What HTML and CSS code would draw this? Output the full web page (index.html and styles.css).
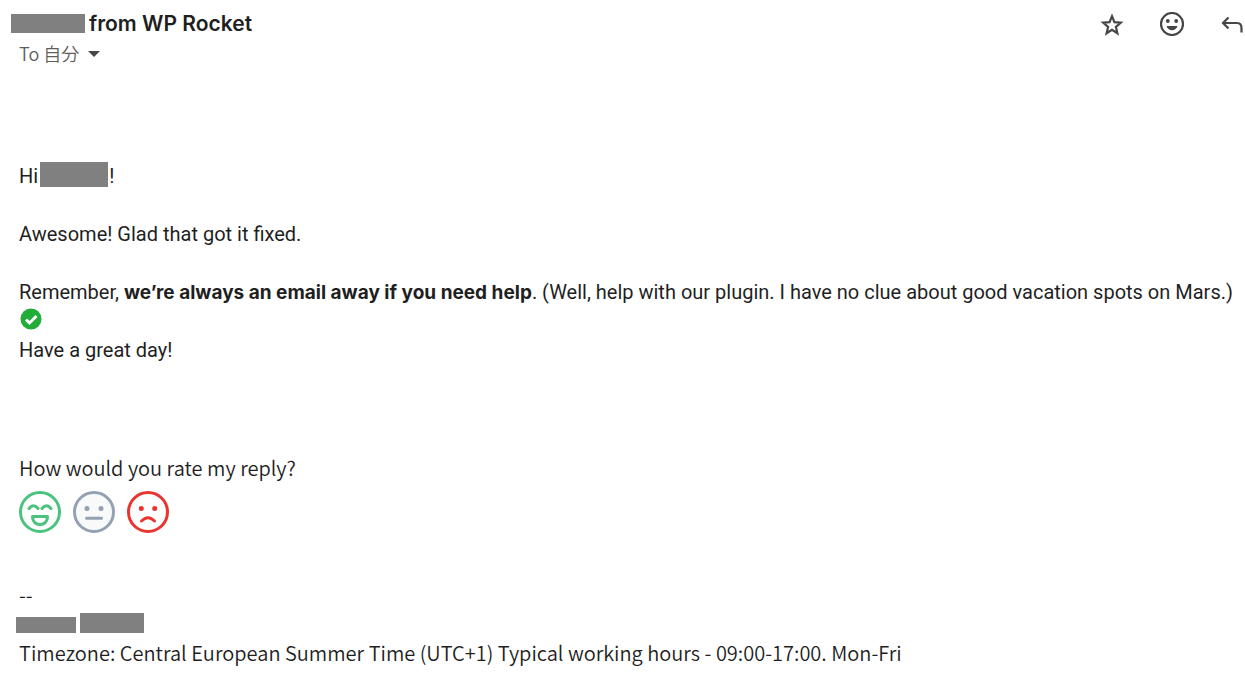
FILE: index.html
```html
<!DOCTYPE html>
<html lang="en">
<head>
    <meta charset="UTF-8">
    <meta name="viewport" content="width=device-width, initial-scale=1.0">
    <title>WP Rocket</title>
    <link rel="stylesheet" href="styles.css">
</head>
<body>
    <header class="mail-header">
        <div class="sender">
            <h1 class="sender-name"><span class="hidden-name hidden-sender"></span>from WP Rocket</h1>
            <button type="button" class="recipient">To 自分
                <svg class="caret" viewBox="0 0 12 6"><path d="M0 0h12L6 6z"/></svg>
            </button>
        </div>
        <div class="actions">
            <button type="button" class="icon-button" aria-label="Star">
                <svg viewBox="0 0 24 24"><path class="star" d="M12 4.200l2.400 6 6.400.5-4.900 4.200 1.500 6.400L12 17.900l-5.400 3.400 1.500-6.400-4.900-4.200 6.400-.5z"/></svg>
            </button>
            <button type="button" class="icon-button" aria-label="React">
                <svg viewBox="0 0 24 24">
                    <circle class="ring" cx="12" cy="12" r="11"/>
                    <circle cx="7.800" cy="9" r="1.900"/>
                    <circle cx="16.200" cy="9" r="1.900"/>
                    <path d="M6.500 14h11c-.8 2.500-2.900 4.200-5.500 4.200S7.300 16.500 6.500 14z"/>
                </svg>
            </button>
            <button type="button" class="icon-button" aria-label="Reply">
                <svg viewBox="0 0 24 24"><path class="arrow" d="M8.500 5.500L3 11l5.500 5.500M3.500 11H17q4.500 0 4.500 5v4.500"/></svg>
            </button>
        </div>
    </header>

    <main class="mail-body">
        <p>Hi<span class="hidden-name hidden-user"></span>!</p>
        <p>Awesome! Glad that got it fixed.</p>
        <p>Remember, <b>we’re always an email away if you need help</b>. (Well, help with our plugin. I have no clue about good vacation spots on Mars.)</p>
        <svg class="check" viewBox="0 0 22 22">
            <circle cx="11" cy="11" r="10.500"/>
            <path d="M6 11.500l3.500 3.500 7-7"/>
        </svg>
        <p>Have a great day!</p>
    </main>

    <section class="rating">
        <p>How would you rate my reply?</p>
        <div class="faces">
            <button type="button" class="face great" aria-label="Great">
                <svg viewBox="0 0 42 42">
                    <circle cx="21" cy="21" r="19.500"/>
                    <path d="M10 17.500q4.500-5.500 9 0M23 17.500q4.500-5.500 9 0M13.500 25.500h15c0 5-3 8-7.500 8s-7.500-3-7.500-8z"/>
                </svg>
            </button>
            <button type="button" class="face okay" aria-label="Okay">
                <svg viewBox="0 0 42 42">
                    <circle cx="21" cy="21" r="19.500"/>
                    <circle class="eye" cx="14" cy="17.500" r="2.500"/>
                    <circle class="eye" cx="28" cy="17.500" r="2.500"/>
                    <path d="M13.500 27.300h15"/>
                </svg>
            </button>
            <button type="button" class="face bad" aria-label="Not good">
                <svg viewBox="0 0 42 42">
                    <circle cx="21" cy="21" r="19.500"/>
                    <circle class="eye" cx="14.300" cy="17.500" r="2.500"/>
                    <circle class="eye" cx="27.700" cy="17.500" r="2.500"/>
                    <path d="M14.500 30q6.500-6.500 13 0"/>
                </svg>
            </button>
        </div>
    </section>

    <footer class="signature">
        <p>--</p>
        <div class="names">
            <span class="hidden-name hidden-first"></span>
            <span class="hidden-name hidden-last"></span>
        </div>
        <p>Timezone: Central European Summer Time (UTC+1) Typical working hours - 09:00-17:00. Mon-Fri</p>
    </footer>
</body>
</html>
```

FILE: styles.css
```css
* {
    box-sizing: border-box;
}
body {
    margin: 0;
    background: #fff;
    color: #1f1f1f;
    font-family: "Noto Sans CJK JP", sans-serif;
    font-size: 20px;
    font-weight: 350;
    line-height: 29px;
}
p, h1 {
    margin: 0;
}
button {
    display: block;
    padding: 0;
    border: 0;
    background: none;
    font: inherit;
    color: inherit;
    cursor: pointer;
}
svg {
    display: block;
}
.hidden-name {
    display: inline-block;
    background: #808080;
}

/* header */
.mail-header {
    display: flex;
    justify-content: space-between;
    padding: 9px 1px 0 11px;
}
.sender-name {
    display: flex;
    align-items: center;
    gap: 4px;
    font-family: Inter, "Noto Sans CJK JP", sans-serif;
    font-size: 21px;
    font-weight: 600;
}
.hidden-sender {
    width: 74px;
    height: 19px;
}
.recipient {
    display: flex;
    align-items: center;
    gap: 9px;
    padding: 1px 0 0 8px;
    font-size: 18px;
    color: #5e5e5e;
}
.caret {
    width: 12px;
    height: 6px;
    fill: #444746;
}
.actions {
    display: flex;
    gap: 36px;
    padding-top: 3px;
}
.icon-button svg {
    width: 24px;
    height: 24px;
    fill: #444746;
}
.icon-button {
    height: 24px;
}
.icon-button .ring,
.icon-button .star,
.icon-button .arrow {
    fill: none;
    stroke: #444746;
    stroke-width: 2.200;
}

/* message */
.mail-body {
    padding: 94px 0 0 19px;
    font-family: Roboto, "Noto Sans CJK JP", sans-serif;
    font-weight: 400;
}
.mail-body b {
    font-family: Inter, sans-serif;
    font-size: 19px;
    font-weight: 700;
}
.mail-body p + p {
    margin-top: 29px;
}
.hidden-user {
    width: 68px;
    height: 25px;
    margin: 0 1px 0 2px;
    vertical-align: top;
}
.check {
    width: 24px;
    height: 29px;
    padding: 1px 1px 6px;
    fill: #21ad38;
}
.check path {
    fill: none;
    stroke: #fff;
    stroke-width: 3;
}

/* rating */
.rating {
    padding: 88px 0 0 19px;
}
.faces {
    display: flex;
    gap: 12px;
    padding-top: 9px;
}
.face svg {
    width: 42px;
    height: 42px;
    fill: none;
    stroke: currentColor;
    stroke-width: 3;
    stroke-linecap: round;
    stroke-linejoin: round;
}
.face .eye {
    fill: currentColor;
    stroke: none;
}
.great {
    color: #4bc27d;
}
.okay {
    color: #94a1b2;
}
.okay circle:first-child {
    fill: #f8fafa;
}
.bad {
    color: #e93430;
}

/* signature */
.signature {
    padding: 47px 0 5px 19px;
}
.names {
    display: flex;
    align-items: flex-end;
    gap: 4px;
    height: 29px;
    margin-left: -3px;
    padding-bottom: 5px;
}
.hidden-first {
    width: 60px;
    height: 16px;
}
.hidden-last {
    width: 64px;
    height: 20px;
}
```
